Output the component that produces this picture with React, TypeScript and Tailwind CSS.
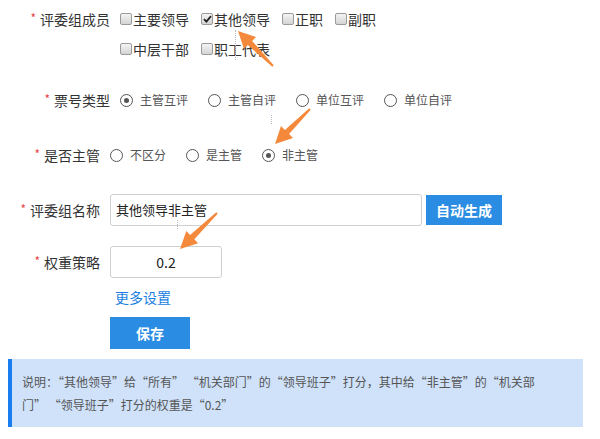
import React from 'react';

const font = { fontFamily: '"Noto Sans CJK SC", "Noto Sans", sans-serif' };

function Label({ text, width }: { text: string; width: string }) {
  return (
    <div className={`${width} shrink-0 flex items-center justify-end text-[14px] text-[#333]`}>
      <span className="text-[#e8464a] text-[12px] mr-[4px] -mt-[2px]">*</span>
      <span>{text}</span>
    </div>
  );
}

function Checkbox({ label, checked }: { label: string; checked?: boolean }) {
  return (
    <label className="flex items-center h-[20px] text-[14px] text-[#333]">
      <span className="w-[12px] h-[12px] mr-[1px] rounded-[2px] border border-[#9a9a9a] bg-gradient-to-b from-[#f4f4f4] to-[#d4d4d4] flex items-center justify-center">
        {checked && (
          <svg width="9" height="8" viewBox="0 0 9 8">
            <path d="M1 4.2 L3.4 6.6 L8 1.2" fill="none" stroke="#222" strokeWidth="1.8" />
          </svg>
        )}
      </span>
      {label}
    </label>
  );
}

function Radio({ label, checked }: { label: string; checked?: boolean }) {
  return (
    <label className="flex items-center h-[20px] text-[12px] text-[#555]">
      <span className="w-[13px] h-[13px] rounded-full border-[1.5px] border-[#555] bg-white flex items-center justify-center mr-[7px]">
        {checked && <span className="w-[5px] h-[5px] rounded-full bg-[#555]" />}
      </span>
      {label}
    </label>
  );
}

const arrows = [
  { x1: 273, y1: 66, x2: 238, y2: 31 },
  { x1: 310, y1: 109, x2: 275, y2: 144 },
  { x1: 217, y1: 213, x2: 180, y2: 249 },
];

function arrowPoints(a: { x1: number; y1: number; x2: number; y2: number }) {
  const dx = a.x2 - a.x1;
  const dy = a.y2 - a.y1;
  const len = Math.hypot(dx, dy);
  const ux = dx / len;
  const uy = dy / len;
  const nx = -uy;
  const ny = ux;
  const head = 17;
  const bx = a.x2 - ux * head;
  const by = a.y2 - uy * head;
  const p = (x: number, y: number) => `${x.toFixed(1)},${y.toFixed(1)}`;
  return [
    p(a.x1 + nx * 1, a.y1 + ny * 1),
    p(bx + nx * 3, by + ny * 3),
    p(bx + nx * 8.5, by + ny * 8.5),
    p(a.x2, a.y2),
    p(bx - nx * 8.5, by - ny * 8.5),
    p(bx - nx * 3, by - ny * 3),
    p(a.x1 - nx * 1, a.y1 - ny * 1),
  ].join(' ');
}

export default function App() {
  return (
    <div className="relative w-[600px] h-[439px] bg-white overflow-hidden" style={font}>
      <div className="flex flex-col">
        {/* 评委组成员 */}
        <div className="flex items-start mt-[9px]">
          <div className="h-[20px] flex">
            <Label text="评委组成员" width="w-[110px]" />
          </div>
          <div className="ml-[10px] w-[265px] flex flex-wrap gap-x-[12px] gap-y-[10px]">
            <Checkbox label="主要领导" />
            <Checkbox label="其他领导" checked />
            <Checkbox label="正职" />
            <Checkbox label="副职" />
            <Checkbox label="中层干部" />
            <Checkbox label="职工代表" />
          </div>
        </div>

        {/* 票号类型 */}
        <div className="flex items-center mt-[31px] h-[20px]">
          <Label text="票号类型" width="w-[110px]" />
          <div className="ml-[10px] flex gap-x-[20px]">
            <Radio label="主管互评" checked />
            <Radio label="主管自评" />
            <Radio label="单位互评" />
            <Radio label="单位自评" />
          </div>
        </div>

        {/* 是否主管 */}
        <div className="flex items-center mt-[35px] h-[20px]">
          <Label text="是否主管" width="w-[100px]" />
          <div className="ml-[10px] flex gap-x-[20px]">
            <Radio label="不区分" />
            <Radio label="是主管" />
            <Radio label="非主管" checked />
          </div>
        </div>

        {/* 评委组名称 */}
        <div className="flex items-center mt-[29px]">
          <Label text="评委组名称" width="w-[100px]" />
          <div className="ml-[10px] w-[312px] h-[32px] border border-[#cfcfcf] rounded-[3px] flex items-center pl-[5px] text-[13px] text-[#222]">
            其他领导非主管
          </div>
          <button className="ml-[4px] w-[76px] h-[30px] bg-[#2a8ce2] text-white text-[14px] font-semibold flex items-center justify-center">
            自动生成
          </button>
        </div>

        {/* 权重策略 */}
        <div className="flex items-center mt-[20px]">
          <Label text="权重策略" width="w-[100px]" />
          <div className="ml-[10px] w-[112px] h-[32px] border border-[#cfcfcf] rounded-[3px] flex items-center justify-center text-[14px] text-[#222]">
            0.2
          </div>
        </div>

        <a className="ml-[115px] mt-[9px] h-[20px] leading-[20px] text-[14px] text-[#1a7fe0] w-fit">更多设置</a>

        <button className="ml-[110px] mt-[10px] w-[80px] h-[32px] bg-[#2a8ce2] text-white text-[14px] font-bold flex items-center justify-center">
          保存
        </button>

        {/* 说明 */}
        <div className="ml-[8px] mt-[10px] w-[575px] h-[68px] bg-[#cfe2fa] border-l-[4px] border-[#1a7ef0] pl-[10px] pt-[11px] text-[12px] leading-[23px] text-[#555]">
          <p className="w-[530px]">
            说明：“其他领导”给“所有” “机关部门”的“领导班子”打分，其中给“非主管”的“机关部门” “领导班子”打分的权重是“0.2”
          </p>
        </div>
      </div>

      {/* faint guide dots */}
      <div className="absolute left-[235px] top-[30px] h-[30px] border-l border-dotted border-[#b8b8c8]" />
      <div className="absolute left-[271px] top-[115px] h-[9px] border-l border-dotted border-[#b8b8c8]" />
      <div className="absolute left-[177px] top-[220px] h-[9px] border-l border-dotted border-[#b8b8c8]" />

      {/* annotation arrows */}
      <svg className="absolute inset-0 pointer-events-none" width="600" height="439" viewBox="0 0 600 439">
        {arrows.map((a, i) => (
          <polygon key={i} points={arrowPoints(a)} fill="#f5893b" />
        ))}
      </svg>
    </div>
  );
}
